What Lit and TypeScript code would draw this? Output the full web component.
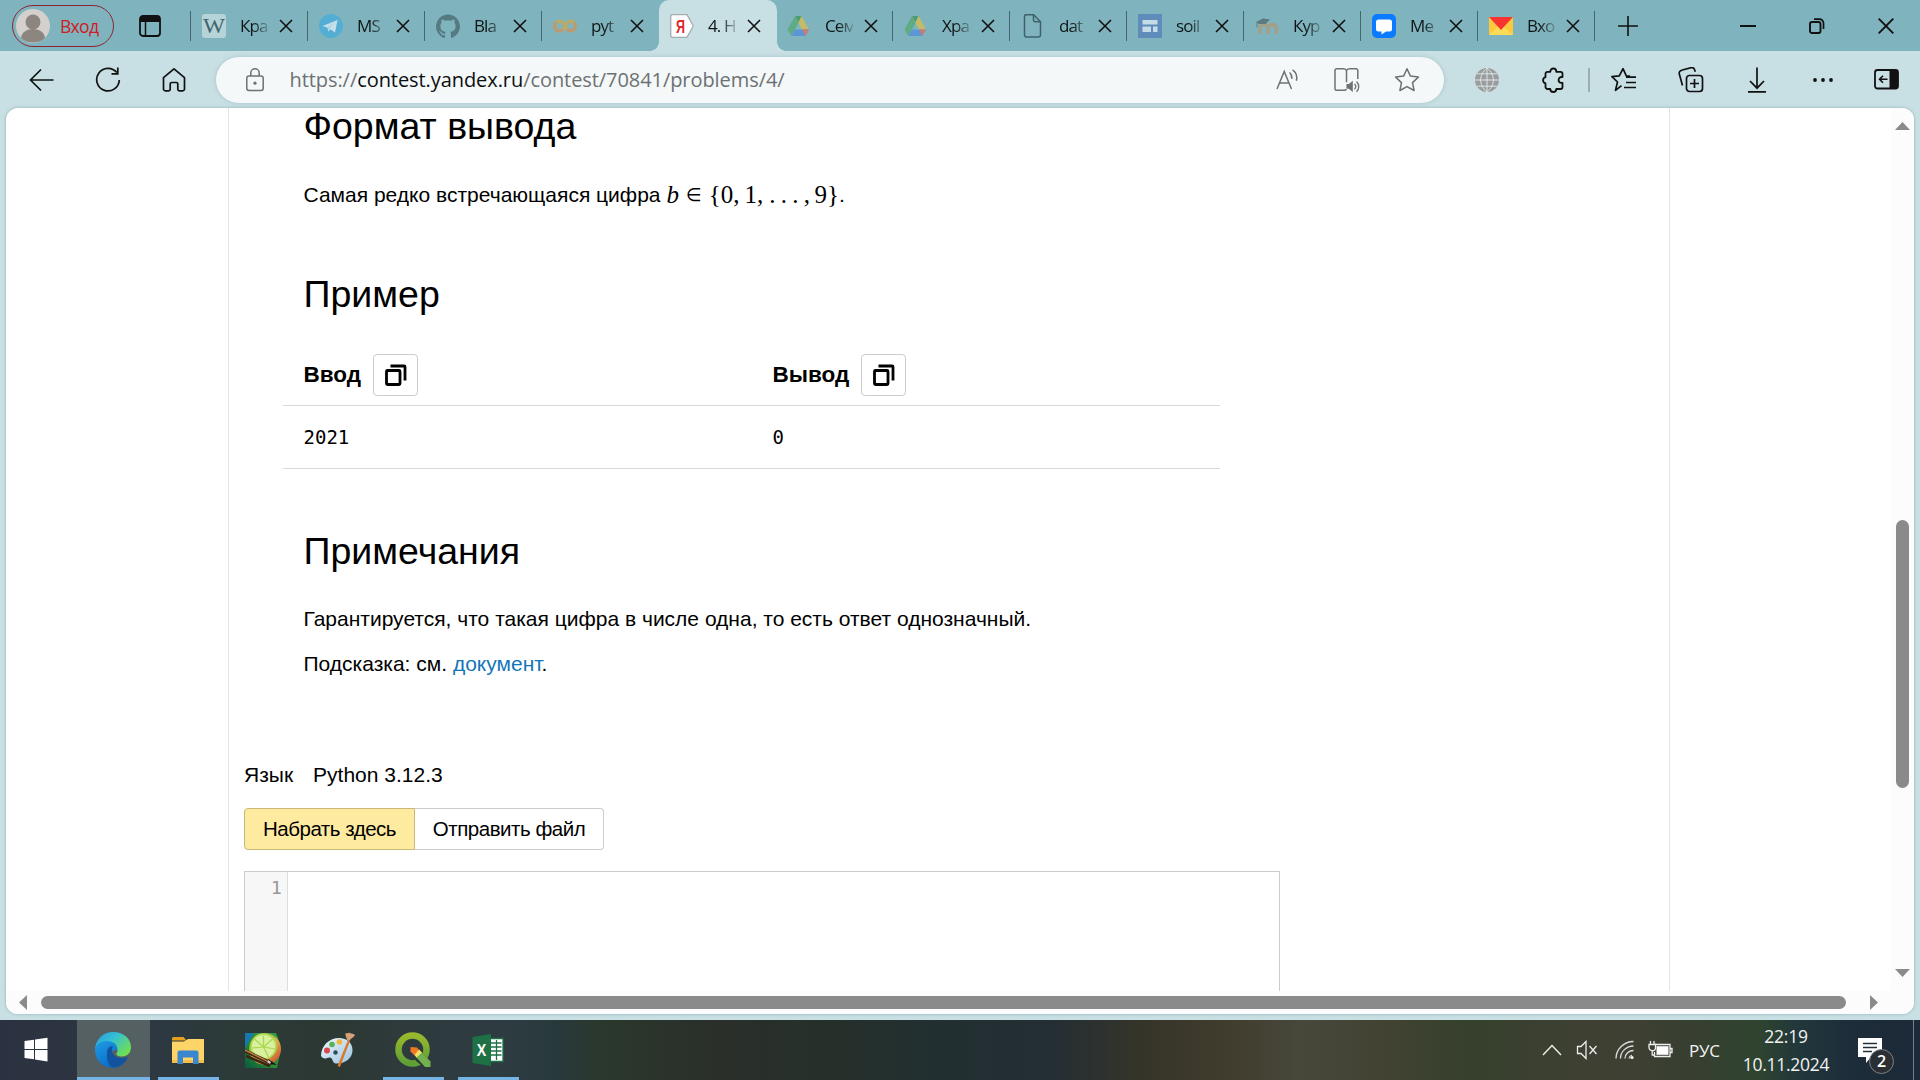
import { LitElement, html, css, svg, nothing } from "lit";
import { customElement } from "lit/decorators.js";
import { classMap } from "lit/directives/class-map.js";

const icon = (w: number, h: number, body: unknown) =>
  html`<svg width=${w} height=${h} viewBox="0 0 ${w} ${h}" fill="none">${body}</svg>`;

const wiki = icon(24, 24, svg`<rect width="24" height="24" rx="3" fill="#b5d3d9"/>
  <text x="12" y="19" text-anchor="middle" font-family="Liberation Serif, serif" font-size="21" textLength="22" lengthAdjust="spacingAndGlyphs" fill="#43646b">W</text>`);
const telegram = icon(24, 24, svg`<circle cx="12" cy="12" r="12" fill="#54aed4"/>
  <path d="M3.500 12 18.600 6 16 18.600 11.400 15.200 9.200 17.400 8.600 13.800Z" fill="#c3e0ec"/><path d="M8.600 13.800 15.600 8.600 9.800 14.600 9.200 17.400Z" fill="#a3cadb"/>`);
const github = icon(24, 24, svg`<path fill="#567a82" d="M12 .5C5.400.5 0 5.900 0 12.600c0 5.300 3.400 9.800 8.200 11.400.6.100.8-.3.800-.6v-2.300c-3.300.7-4-1.400-4-1.400-.5-1.400-1.300-1.800-1.300-1.800-1.100-.7.100-.7.100-.7 1.200.1 1.800 1.200 1.800 1.200 1.100 1.900 2.800 1.300 3.500 1 .1-.8.4-1.300.8-1.600-2.700-.3-5.500-1.300-5.500-5.900 0-1.300.5-2.400 1.200-3.200-.1-.3-.5-1.500.1-3.200 0 0 1-.3 3.300 1.200a11.500 11.500 0 0 1 6 0c2.300-1.500 3.300-1.200 3.300-1.200.7 1.700.2 2.900.1 3.200.8.8 1.200 1.900 1.200 3.200 0 4.600-2.800 5.600-5.500 5.900.4.4.8 1.100.8 2.200v3.300c0 .3.2.7.8.6A12 12 0 0 0 24 12.600C24 5.900 18.600.5 12 .5Z"/>`);
const colab = icon(24, 24, svg`<circle cx="6.500" cy="12" r="4.800" stroke="#b8aa68" stroke-width="3.400"/><circle cx="17.500" cy="12" r="4.800" stroke="#b8aa68" stroke-width="3.400"/>
  <path d="M14.100 15.400a4.800 4.800 0 0 0 6.800-6.800" stroke="#ba9a72" stroke-width="3.400"/><path d="M3.100 8.600A4.800 4.800 0 0 0 9.900 15.400" stroke="#ba9a72" stroke-width="3.400"/>`);
const yandex = icon(24, 24, svg`<path d="M2.500.7H17L23.300 12 17 23.300H2.500A1.800 1.800 0 0 1 .7 21.500v-19A1.800 1.800 0 0 1 2.500.7Z" fill="#fff" stroke="#a3acaf" stroke-width="1.300"/>
  <text x="10.500" y="18.800" text-anchor="middle" font-family="Liberation Sans, sans-serif" font-size="19" font-weight="700" textLength="9" lengthAdjust="spacingAndGlyphs" fill="#e3262c">Я</text>`);
const drive = icon(24, 24, svg`<path d="M8 2 .5 15.500 4.300 22 11.500 9Z" fill="#5eac84"/><path d="M8 2h6.500L22 15.500h-7Z" fill="#c5bb66"/><path d="M8 2h6.500l-3.200 6.500Z" fill="#4d9c78"/>
  <path d="M4.300 22 8 15.500h14L18.300 22Z" fill="#5b97d6"/><path d="m18.300 22 3.700-6.500h-7Z" fill="#cc7b72"/>`);
const page = icon(24, 24, svg`<path d="M3.500.8h9.200l6.800 7v13a2.300 2.300 0 0 1-2.300 2.300H5.800a2.300 2.300 0 0 1-2.300-2.300V3A2.300 2.300 0 0 1 5.800.8M12.500.8v5a2 2 0 0 0 2 2h5" stroke="#3f626a" stroke-width="1.500"/>`);
const sites = icon(24, 24, svg`<rect width="24" height="24" fill="#5f8cbb"/><path d="M4.500 6h15v4.500h-15zM4.500 12.500h8.500V18H4.500zM15 12.500h4.500V18H15z" fill="#c5dce6"/>`);
const moodle = icon(24, 24, svg`<path d="M5 20v-7.500M5 14c0-4.500 8-4.500 8 0v6M13 14c0-4.500 8.500-4.500 8.500 0v6" stroke="#a3a08a" stroke-width="3.600"/><path d="M1 8 8 4.500l7 1L10.500 10H4Z" fill="#5c7a80"/><path d="M2 8.500v5" stroke="#5c7a80"/>`);
const messenger = icon(24, 24, svg`<rect width="24" height="24" rx="5" fill="#0a7bff"/><path d="M6.500 5.500h11a2.500 2.500 0 0 1 2.500 2.500v7a2.500 2.500 0 0 1-2.500 2.500H14l-4.500 3v-3h-3A2.500 2.500 0 0 1 4 15V8a2.500 2.500 0 0 1 2.500-2.500Z" fill="#fff"/>`);
const mail = icon(24, 24, svg`<path d="M0 3h24v18H0z" fill="#fcc93c"/><path d="m0 21 9-8h6l9 8Z" fill="#fbdb57"/><path d="M0 3h24L12 16Z" fill="#f9332f"/>`);

const cross = icon(14, 14, svg`<path d="m1 1 12 12M13 1 1 13" stroke="#111" stroke-width="1.600"/>`);

const tabs = [
  { i: wiki, t: "Кра" }, { i: telegram, t: "MS" }, { i: github, t: "Bla" }, { i: colab, t: "pyt", bare: true },
  { i: yandex, t: "4. Н", active: true, bare: true }, { i: drive, t: "Сем" }, { i: drive, t: "Хра" }, { i: page, t: "dat" },
  { i: sites, t: "soil" }, { i: moodle, t: "Кур" }, { i: messenger, t: "Me" }, { i: mail, t: "Вхо" },
];

@customElement("browser-chrome")
class BrowserChrome extends LitElement {
  static styles = css`
    :host { display: block; font-family: "Open Sans", "Noto Sans", sans-serif; color: #101414; }
    svg { display: block; flex: none; }
    .strip { height: 51px; background: #7fb4be; display: flex; align-items: center; }
    .pill { box-sizing: border-box; margin-left: 12px; width: 102px; height: 42px; border: 1.500px solid #8b2630; border-radius: 21px; display: flex; align-items: center; padding-left: 3px; gap: 10px; color: #cf1b23; font-size: 17.500px; letter-spacing: -0.700px; }
    .ws { margin-left: 25px; }
    .tabs { display: flex; margin-left: 29px; align-self: stretch; align-items: stretch; }
    .lead { width: 1px; height: 30px; background: #45686f; align-self: center; }
    .tab { box-sizing: border-box; width: 117px; display: flex; align-items: center; padding-left: 11px; position: relative; }
    .tab.active { background: #c8dfe3; border-radius: 10px 10px 0 0; margin: 0 -1px 0 0; width: 118px; }
    .tab.active::before, .tab.active::after { content: ""; position: absolute; bottom: 0; width: 9px; height: 9px; }
    .tab.active::before { left: -9px; background: radial-gradient(circle at 0 0, transparent 8.500px, #c8dfe3 9px); }
    .tab.active::after { right: -9px; background: radial-gradient(circle at 100% 0, transparent 8.500px, #c8dfe3 9px); }
    .label { width: 28px; margin-left: 14px; margin-right: 11px; font-size: 17px; letter-spacing: -0.900px; overflow: hidden; white-space: nowrap; -webkit-mask-image: linear-gradient(90deg, #000 45%, rgba(0, 0, 0, .2) 100%); mask-image: linear-gradient(90deg, #000 45%, rgba(0, 0, 0, .2) 100%); }
    .rule { margin-left: auto; width: 1px; height: 30px; background: #45686f; }
    .plus { margin-left: 22px; }
    .win { margin-left: auto; display: flex; align-items: center; gap: 53px; padding-right: 26.500px; }
    .bar { height: 57px; background: #c8dfe3; display: flex; align-items: center; }
    .back { margin-left: 29px; }
    .reload { margin-left: 41px; }
    .home { margin-left: 41px; }
    .addr { margin: 0 0 0 30px; width: 1228px; height: 46px; border-radius: 23px; background: #f4f8f9; box-shadow: 0 0 4px rgba(110, 150, 158, .35); display: flex; align-items: center; box-sizing: border-box; padding: 0 24px 0 30px; }
    .url { margin-left: 25.500px; font-size: 20px; letter-spacing: -0.070px; color: #6d7172; white-space: nowrap; }
    .url b { font-weight: 400; color: #0c0f10; }
    .in { margin-left: auto; display: flex; gap: 34px; align-items: center; }
    .right { display: flex; align-items: center; margin-left: 30px; }
    .div { width: 1.500px; height: 24px; background: #9aadb1; margin: 0 21px 0 22px; }
    .g1 { width: 40px; } .g2 { width: 41px; } .g3 { width: 43px; } .g4 { width: 45px; } .g5 { width: 40px; }
  `;

  render() {
    return html`
      <div class="strip">
        <div class="pill">
          ${icon(34, 34, svg`<circle cx="17" cy="17" r="17" fill="#d3d0cd"/><circle cx="17" cy="13" r="7.500" fill="#8d8680"/><path d="M5 29c1-12 23-12 24 0-6 6-18 6-24 0Z" fill="#8d8680"/>`)}
          <span>Вход</span>
        </div>
        <div class="ws">${icon(22, 22, svg`<rect x="1" y="1" width="20" height="20" rx="3" stroke="#111" stroke-width="1.800"/><path d="M1 4a3 3 0 0 1 3-3h14a3 3 0 0 1 3 3v3H1z" fill="#111"/><path d="M6.500 6v15" stroke="#111" stroke-width="1.500"/>`)}</div>
        <div class="tabs">
          <div class="lead"></div>
          ${tabs.map((t) => html`<div class=${classMap({ tab: true, active: !!t.active })}>
            ${t.i}<span class="label">${t.t}</span>${cross}${t.bare ? nothing : html`<i class="rule"></i>`}
          </div>`)}
        </div>
        <div class="plus">${icon(22, 22, svg`<path d="M11 1v20M1 11h20" stroke="#111" stroke-width="1.600"/>`)}</div>
        <div class="win">
          ${icon(16, 16, svg`<path d="M0 8h16" stroke="#111" stroke-width="2"/>`)}
          ${icon(16, 16, svg`<rect x="1" y="4" width="10.500" height="11" rx="2" stroke="#111" stroke-width="1.900"/><path d="M5 1.200h5.500a4 4 0 0 1 4 4V11" stroke="#111" stroke-width="1.700"/>`)}
          ${icon(16, 16, svg`<path d="m.7.7 14.600 14.600M15.300.7.7 15.300" stroke="#111" stroke-width="1.900"/>`)}
        </div>
      </div>
      <div class="bar">
        <div class="back">${icon(25, 24, svg`<path d="M24.500 12H1.500M12 1.500 1.500 12 12 22.500" stroke="#111" stroke-width="1.700"/>`)}</div>
        <div class="reload">${icon(26, 26, svg`<path d="M21.800 5.500A11.300 11.300 0 1 0 24.300 13" stroke="#111" stroke-width="1.700"/><path d="M22.800.5v6.300h-6.300" stroke="#111" stroke-width="1.700"/>`)}</div>
        <div class="home">${icon(24, 26, svg`<path d="M1.500 10.700 12 1.800l10.500 8.900V22a1.800 1.800 0 0 1-1.800 1.800h-3.400a1.500 1.500 0 0 1-1.500-1.500V17a1.500 1.500 0 0 0-1.500-1.500h-4.600A1.500 1.500 0 0 0 8.200 17v5.300a1.500 1.500 0 0 1-1.500 1.500H3.300A1.800 1.800 0 0 1 1.500 22Z" stroke="#111" stroke-width="1.700" stroke-linejoin="round"/>`)}</div>
        <div class="addr">
          ${icon(18, 24, svg`<rect x=".8" y="8" width="16.400" height="14.500" rx="2.200" stroke="#6d7172" stroke-width="1.500"/><path d="M4.800 8V5a4.200 4.200 0 0 1 8.400 0v3" stroke="#6d7172" stroke-width="1.500"/><circle cx="9" cy="15.200" r="1.600" fill="#6d7172"/>`)}
          <span class="url">https://<b>contest.yandex.ru</b>/contest/70841/problems/4/</span>
          <div class="in">
            ${icon(24, 24, svg`<path d="M1 21 8.200 3.500 15.500 21M3.700 15h9" stroke="#6d7172" stroke-width="1.500"/><path d="M13.500 4.500c1.800 1.500 2.600 3.800 2.300 6.300M16.600 1.800c3.600 2.700 4.800 7 3.800 11" stroke="#6d7172" stroke-width="1.500"/>`)}
            ${icon(26, 26, svg`<path d="M12.500 3.200C11.500 2 10.500 1.800 9 1.800H2.800A1.600 1.600 0 0 0 1 3.500v18.300a1.500 1.500 0 0 0 1.500 1.500H10c1.500 0 2-.3 2.500-1M12.500 3.200C13.500 2 14.500 1.800 16 1.800h6A1.600 1.600 0 0 1 23.800 3.500V12M12.500 3.200v12" stroke="#6d7172" stroke-width="1.500"/><path d="M12.500 17h2.300l4-3.300v11.300l-4-3.300h-2.300z" fill="#6d7172"/><path d="M20.500 17c1.500 1.500 1.500 3.700 0 5.200M22.500 14.500c3 3 3 7.300 0 10.300" stroke="#6d7172" stroke-width="1.300"/>`)}
            ${icon(26, 26, svg`<path d="m13 1.800 3.400 7.300 8 1-5.900 5.500 1.600 7.900L13 19.600l-7.100 3.900 1.600-7.900L1.600 10.100l8-1Z" stroke="#6d7172" stroke-width="1.500" stroke-linejoin="round"/>`)}
          </div>
        </div>
        <div class="right">
          ${icon(26, 26, svg`<circle cx="13" cy="13" r="12" fill="#9b9c9d"/><path d="M1 13h24M13 1v24M3 6.800h20M3 19.200h20M13 1C4.500 8 4.500 18 13 25M13 1c8.500 7 8.500 17 0 24" stroke="#dbe6e8" stroke-width="1"/>`)}
          <span class="g1"></span>
          ${icon(26, 26, svg`<path d="M7.500 4.800H10.300a3 3.300 0 0 1 6 0H20.500a2 2 0 0 1 2 2V10h-1a2.900 2.900 0 0 0 0 5.800h1v4.200a2 2 0 0 1-2 2H16.300a3 3 0 0 1-6 0H7.500a2 2 0 0 1-2-2v-3.600a3.200 3.200 0 0 1 0-6.200V6.800a2 2 0 0 1 2-2Z" stroke="#111" stroke-width="1.800" stroke-linejoin="round"/>`)}
          <i class="div"></i>
          ${icon(26, 26, svg`<path d="m10.500 18.700-6 4.600 2-8.300L.9 9.700l7.400-.9L12 1.700l3.300 7.100 3.700.4M15 10.200h10M15 15.500h10M13 20.500h12" stroke="#111" stroke-width="1.700" stroke-linejoin="round"/>`)}
          <span class="g2"></span>
          ${icon(26, 26, svg`<rect x="8.500" y="8.500" width="16" height="16" rx="3" stroke="#111" stroke-width="1.700"/><path d="M16.500 12v9M12 16.500h9M4.500 18.500 1.300 7A3 3 0 0 1 3.500 3.300l9.500-2.600a3 3 0 0 1 3.500 1.800l.8 2.200" stroke="#111" stroke-width="1.700"/>`)}
          <span class="g3"></span>
          ${icon(20, 26, svg`<path d="M10 .5V21M3 14l7 7.200L17 14M1 24.800h18" stroke="#111" stroke-width="1.700"/>`)}
          <span class="g4"></span>
          ${icon(22, 8, svg`<circle cx="3" cy="4" r="1.900" fill="#111"/><circle cx="11" cy="4" r="1.900" fill="#111"/><circle cx="19" cy="4" r="1.900" fill="#111"/>`)}
          <span class="g5"></span>
          ${icon(25, 23, svg`<rect x="1" y="2" width="23" height="18.500" rx="2.500" stroke="#111" stroke-width="1.800"/><path d="M15.500 2H21.500A2.500 2.500 0 0 1 24 4.500v13.500a2.500 2.500 0 0 1-2.500 2.500h-6z" fill="#111"/><path d="M13.500 11.200H6M9 7.700 5.500 11.200 9 14.700" stroke="#111" stroke-width="1.600"/>`)}
        </div>
      </div>
    `;
  }
}

const copyIcon = icon(24, 24, svg`<rect x="3.500" y="7.500" width="13.500" height="14" rx="1" stroke="#000" stroke-width="2.800"/><path d="M7.500 3H21a1 1 0 0 1 1 1v13.500" stroke="#000" stroke-width="2.800"/>`);

@customElement("problem-page")
class ProblemPage extends LitElement {
  static styles = css`
    :host { display: grid; grid-template: 883px 23px / 1885px 23px; height: 906px; margin: 0 6px; background: #fff; border-radius: 12px; overflow: hidden; font-family: "Liberation Sans", Arial, sans-serif; color: #000; box-shadow: 0 0 3px rgba(80, 120, 128, .5); }
    svg { display: block; }
    .view { overflow: hidden; }
    .sheet { box-sizing: border-box; margin-left: 222px; width: 1442px; height: 883px; border: solid #e3e3e3; border-width: 0 1px; padding-left: 15px; }
    .body { padding-left: 59.500px; display: flow-root; }
    h2 { font-size: 37.500px; line-height: 44px; font-weight: 400; margin: 0; }
    h2.first { line-height: 36px; }
    p { font-size: 21px; line-height: 30px; margin: 0; white-space: nowrap; }
    .fmt { margin-top: 36px; display: flex; }
    .math { font-family: "Liberation Serif", serif; font-size: 25px; margin-left: 6px; display: flex; }
    .in { font-family: "DejaVu Sans", sans-serif; font-size: 18px; margin: 0 7px 0 7px; }
    .dots { letter-spacing: 5.300px; margin-left: 6px; margin-right: -1px; }
    .sp { margin-left: 5px; }
    .ex { margin-top: 62px; }
    .table { margin: 28px 0 0 -20.500px; width: 937px; }
    .tr { display: grid; grid-template-columns: 469px 1fr; padding-left: 20.500px; border-bottom: 1px solid #d9d9d9; align-items: center; }
    .tr.head { height: 61px; font-weight: 700; font-size: 22.500px; }
    .tr.row { height: 62px; font-family: "DejaVu Sans Mono", monospace; font-size: 19px; }
    .cell { display: flex; align-items: center; gap: 11.500px; }
    .copy { width: 43px; height: 40px; border: 1px solid #ccc; border-radius: 4px; display: grid; place-items: center; }
    .notes { margin-top: 60px; }
    .n1 { margin-top: 31px; }
    .n2 { margin-top: 15px; }
    a { color: #1476b8; }
    .lang { margin-top: 81px; font-size: 21px; line-height: 30px; display: flex; gap: 20px; }
    .seg { margin-top: 18px; display: flex; width: 360px; height: 42px; font-size: 20.500px; letter-spacing: -0.480px; line-height: 40px; text-align: center; }
    .seg span { box-sizing: border-box; height: 42px; border: 1px solid #ccc; white-space: nowrap; }
    .on { width: 171px; background: #ffeba0; border-color: #c9b976 !important; border-radius: 4px 0 0 4px; }
    .off { width: 189px; border-left: 0 !important; border-radius: 0 4px 4px 0; }
    .editor { box-sizing: border-box; margin-top: 21px; width: 1036px; height: 200px; border: 1px solid #ccc; display: flex; }
    .gutter { padding: 4px 5px 0 0; width: 37px; height: 200px; text-align: right; background: #f7f7f7; border-right: 1px solid #ddd; font-family: "DejaVu Sans Mono", monospace; font-size: 18.500px; line-height: 24px; color: #999; }
    .vs, .hs { background: #fcfcfc; display: flex; align-items: center; }
    .vs { flex-direction: column; padding-top: 14px; box-sizing: border-box; grid-column: 2; grid-row: 1; }
    .vthumb { margin-top: 390px; width: 13px; height: 268px; border-radius: 7px; background: #8a8a8a; }
    .vdown { margin-top: 181px; }
    .hs { grid-column: 1 / 3; box-sizing: border-box; padding-left: 13px; }
    .hthumb { margin: 0 24px 0 14px; width: 1805px; height: 13px; border-radius: 7px; background: #8a8a8a; }
  `;

  render() {
    return html`
      <div class="view"><div class="sheet">
        <div class="body">
          <h2 class="first">Формат вывода</h2>
          <p class="fmt">Самая редко встречающаяся цифра
            <span class="math"><i>b</i><span class="in">∈</span><span>{0,</span><span class="sp">1,</span><span class="dots">...,</span><span>9}</span></span><span>.</span></p>
          <h2 class="ex">Пример</h2>
          <div class="table">
            <div class="tr head">
              <div class="cell">Ввод<span class="copy">${copyIcon}</span></div>
              <div class="cell">Вывод<span class="copy">${copyIcon}</span></div>
            </div>
            <div class="tr row"><span>2021</span><span>0</span></div>
          </div>
          <h2 class="notes">Примечания</h2>
          <p class="n1">Гарантируется, что такая цифра в числе одна, то есть ответ однозначный.</p>
          <p class="n2">Подсказка: см. <a>документ</a>.</p>
        </div>
        <div class="lang"><span>Язык</span><span>Python 3.12.3</span></div>
        <div class="seg"><span class="on">Набрать здесь</span><span class="off">Отправить файл</span></div>
        <div class="editor"><div class="gutter">1</div></div>
      </div></div>
      <div class="vs">
        ${icon(15, 8, svg`<path d="M0 8 7.500 0 15 8Z" fill="#8a8a8a"/>`)}
        <div class="vthumb"></div>
        <div class="vdown">${icon(15, 8, svg`<path d="M0 0h15L7.500 8Z" fill="#8a8a8a"/>`)}</div>
      </div>
      <div class="hs">
        ${icon(8, 15, svg`<path d="M8 0v15L0 7.500Z" fill="#8a8a8a"/>`)}
        <div class="hthumb"></div>
        ${icon(8, 15, svg`<path d="M0 0v15l8-7.500Z" fill="#8a8a8a"/>`)}
      </div>
    `;
  }
}

const apps = [
  { k: "start", i: icon(24, 26, svg`<path d="M.5 4 10 2.700V12H.5zM11 2.500 23.500.8V12H11zM.5 13H10v9.300L.5 21zM11 13h12.500v11.500L11 22.600z" fill="#fff"/>`) },
  { k: "edge", run: true, i: icon(36, 36, svg`<defs>
      <linearGradient id="a" x1="0" y1="0" x2="1" y2=".7"><stop stop-color="#2596dd"/><stop offset=".45" stop-color="#35bfd6"/><stop offset="1" stop-color="#6fe04e"/></linearGradient>
      <linearGradient id="b" x1="0" y1="0" x2=".6" y2="1"><stop stop-color="#1f9de3"/><stop offset="1" stop-color="#0a6ccb"/></linearGradient></defs>
      <path d="M0 17C1 7 8 0 18 0c11 0 18 7 18 15 0 6-4 9.500-9 9.500-4 0-6.500-1.500-5.500-3 3-4-.5-9.500-7.500-10C7 11 2 13 0 17Z" fill="url(#a)"/>
      <path d="M0 18c1-6 6-9 12-9 7 0 11.500 5 10 9-4-.5-7 2-6.500 7 .5 5 5 9.500 9.500 9.500C11 39 0 30 0 18Z" fill="url(#b)"/>
      <path d="M12 20c0-3 2.500-6 6-6-4 7 3 15 15 11-3 7-9 11-16 10.500-4-3-5.500-8-5-15.500Z" fill="#11539f"/>`) },
  { k: "files", run: true, i: icon(32, 28, svg`<path d="M0 2.500A1.500 1.500 0 0 1 1.500 1h10l3 3.500H0z" fill="#e3a11c"/><path d="M0 5.500h12L16 3h16v24H0z" fill="#fcd468"/><path d="M0 24h32v3H0z" fill="#f3bf48"/><path d="M5.500 28V16.500a2 2 0 0 1 2-2h17a2 2 0 0 1 2 2V28H21v-6.500H11V28Z" fill="#3a86cf"/>`) },
  { k: "sai", i: icon(36, 36, svg`<defs><linearGradient id="c" x1="0" y1="1" x2="1" y2="0"><stop stop-color="#045b3c"/><stop offset=".45" stop-color="#2f8c38"/><stop offset="1" stop-color="#2f9d4c"/></linearGradient>
      <linearGradient id="e" x1="0" y1="0" x2="1" y2="1"><stop stop-color="#43b02c"/><stop offset=".55" stop-color="#d9b54a"/><stop offset="1" stop-color="#c9342a"/></linearGradient></defs>
      <path d="M0 1h31q4 8 4.500 18L32 36H0z" fill="url(#c)"/><path d="M0 1h9L0 16z" fill="#1678b3"/><circle cx="20" cy="17" r="16" fill="url(#e)"/><circle cx="18.500" cy="14.500" r="13.200" fill="#b4dd57"/><circle cx="18.500" cy="14.500" r="11.500" fill="#d9f0a0"/>
      <path d="M18.500 15V3.500M18.500 15l9-8M18.500 15l11.500 2M18.500 15l-9-8M18.500 15 7 16M18.500 15l5 10" stroke="#a9d84c" stroke-width="1.200"/>
      <path d="m0 17 28 13-2 3L0 21z" fill="#4a2a15"/><path d="m0 18 22 11" stroke="#c08a4b" stroke-width="1.300"/><path d="m1 24 24 10" stroke="#3a2413" stroke-width="2.500"/><path d="m23 27 9 6-8-1z" fill="#1c1411"/><path d="m23 28 3 2-1 2-3-2z" fill="#d7d3cb"/>`) },
  { k: "paint", i: icon(36, 38, svg`<defs><linearGradient id="d" x1="0" y1="0" x2="1" y2="1"><stop stop-color="#eef6fb"/><stop offset="1" stop-color="#9cc5e4"/></linearGradient></defs>
      <path d="M1 25C1 14 10 6.500 20 7c8 .4 13 6 12.500 13C32 28 24 33 16 32.500c-4-.3-2.500-5-6-6-3-.8-5 3.500-9-1.500Z" fill="url(#d)"/><circle cx="7" cy="19.500" r="3" fill="#d8474c"/><circle cx="12" cy="13.500" r="2.800" fill="#57b356"/><circle cx="19.500" cy="11" r="2.800" fill="#f0b93c"/><circle cx="15.500" cy="21.500" r="2.200" fill="#2f4a57"/>
      <path d="M17.500 35 28 9l2 1L20 36Z" fill="#d97826"/><path d="M27 9c-.5-3-2-4-1.500-7 2 1 3.500-1 4.500 0s3 0 5 2c-1.500 3-4 3-6 6Z" fill="#d3a077"/>`) },
  { k: "qgis", run: true, i: icon(36, 36, svg`<defs><linearGradient id="f" x1="0" y1="0" x2="0" y2="1"><stop stop-color="#97b82c"/><stop offset="1" stop-color="#5f9f35"/></linearGradient></defs>
      <circle cx="17.500" cy="17.500" r="14" stroke="url(#f)" stroke-width="6.500"/><path d="m19 25 7-5 10 10v6h-6l-9-7Z" fill="#2c3a35"/><path d="m20.500 24.500 6-4.500 9 9.500v5.500h-5.500Z" fill="#72b050"/><path d="m15.500 15 6.500.5 2.500 3-5 5-4-4Z" fill="#ee7a25"/><path d="m19.500 23 4.500-5.500 3 3-5.500 5Z" fill="#f4df6a"/>`) },
  { k: "excel", run: true, i: icon(32, 32, svg`<path d="M17 4.500h14v23H17z" fill="#fff" stroke="#1e7145" stroke-width="1.300"/><path d="M19 9h10.500M19 13h10.500M19 17h10.500M19 21h10.500M24.500 6v20" stroke="#1e7145" stroke-width="1.300"/><path d="M.5 3 19 0v32L.5 29z" fill="#1e7145"/>
      <text x="9.500" y="21.500" text-anchor="middle" font-family="Liberation Sans, sans-serif" font-weight="700" font-size="17" textLength="9.500" lengthAdjust="spacingAndGlyphs" fill="#fff">X</text>`) },
];

@customElement("task-bar")
class TaskBar extends LitElement {
  static styles = css`
    :host { display: flex; height: 60px; font-family: "Open Sans", "Noto Sans", sans-serif; color: #f2f2f2; font-size: 17.500px;
      background: linear-gradient(90deg, #2b3140 0, #2d3842 150px, #2c3a38 230px, #2c3832 330px, #2e3a3c 400px, #2e3c42 500px, #28393b 560px, #2b382c 600px, #2a2f2a 720px, #26302a 820px, #222f31 940px, #242e34 1050px, #373529 1150px, #403b2d 1220px, #47483a 1300px, #414232 1390px, #35412c 1470px, #3a4030 1520px, #3f4033 1620px, #363f30 1700px, #2f4430 1760px, #22383a 1795px, #1d2d3a 1850px, #1d2938 1920px); }
    svg { display: block; flex: none; }
    .app { box-sizing: border-box; width: 61px; height: 60px; display: grid; place-items: center; margin: 0 7px; padding-right: 2px; }
    .app.run { border-bottom: 3px solid #76b4e6; padding-top: 3px; }
    .app.start { width: 73px; margin: 0 4px 0 0; }
    .app.edge { width: 73px; margin: 0 1px 0 0; background: #556062; }
    .tray { margin-left: auto; display: flex; align-items: center; }
    .s1 { width: 14px; } .s2 { width: 17px; } .s3 { width: 13px; }
    .lang { margin: 0 0 0 16px; width: 33px; font-size: 17px; letter-spacing: -0.300px; }
    .clock { width: 120px; margin-left: 4px; text-align: center; line-height: 28px; letter-spacing: -0.250px; }
    .note { position: relative; margin-left: 12px; width: 55px; height: 60px; }
    .note svg { position: absolute; left: 0; top: 18px; }
    .badge { position: absolute; left: 11px; top: 29px; width: 23px; height: 23px; border-radius: 50%; border: 1px solid #7b8084; background: #2b2f33; color: #fff; font-size: 16px; font-weight: 600; line-height: 23px; text-align: center; }
    .peek { width: 1px; height: 60px; background: #76808a; margin-right: 6px; }
  `;

  render() {
    return html`
      ${apps.map((a) => html`<div class=${classMap({ app: true, run: !!a.run, [a.k]: true })}>${a.i}</div>`)}
      <div class="tray">
        ${icon(20, 12, svg`<path d="m1 11 9-9.500L19 11" stroke="#eee" stroke-width="1.400"/>`)}
        <span class="s1"></span>
        ${icon(22, 20, svg`<path d="M1.500 6.500H5l5-5v17l-5-5H1.500zM13.500 6l7 8M20.500 6l-7 8" stroke="#eee" stroke-width="1.300"/>`)}
        <span class="s2"></span>
        ${icon(20, 20, svg`<path d="M1 18.500C1 9 9 1.500 18.500 1.500M5.500 18.500C5.500 11.500 11.500 6 18.500 6M10 18.500c0-4.500 4-8 8.500-8" stroke="#ddd" stroke-width="1.300"/><path d="M14 18.500a4.500 4.500 0 0 1 3-3.500" stroke="#ddd" stroke-width="1.300"/><circle cx="17" cy="17.500" r="1.600" fill="#fff"/>`)}
        <span class="s3"></span>
        ${icon(25, 18, svg`<path d="M7 3.500h15v12H6.500V11M22 7.500h2v4h-2" stroke="#eee" stroke-width="1.300"/><path d="M8.500 5.200h12v8.600h-12z" fill="#fff"/><path d="M2.500 0v3M6 0v3M1 3.500h6.500v3a3 3 0 0 1-6.500 0zM4.200 9.500v4.500h2.300" stroke="#eee" stroke-width="1.300"/>`)}
        <span class="lang">РУС</span>
        <div class="clock">22:19<br>10.11.2024</div>
        <div class="note">
          ${icon(24, 26, svg`<path d="M0 0h24v19H13l-5 6v-6H0z" fill="#fff"/><path d="M5 5.500h14M5 9.500h14M5 13.500h9" stroke="#22303a" stroke-width="1.400"/>`)}
          <span class="badge">2</span>
        </div>
        <i class="peek"></i>
      </div>
    `;
  }
}

@customElement("app-root")
class AppRoot extends LitElement {
  static styles = css`
    :host { display: flex; flex-direction: column; width: 1920px; height: 1080px; overflow: hidden; background: #c8dfe3; }
    .foot { margin-top: 6px; }
  `;
  render() {
    return html`<browser-chrome></browser-chrome><problem-page></problem-page><task-bar class="foot"></task-bar>`;
  }
}
